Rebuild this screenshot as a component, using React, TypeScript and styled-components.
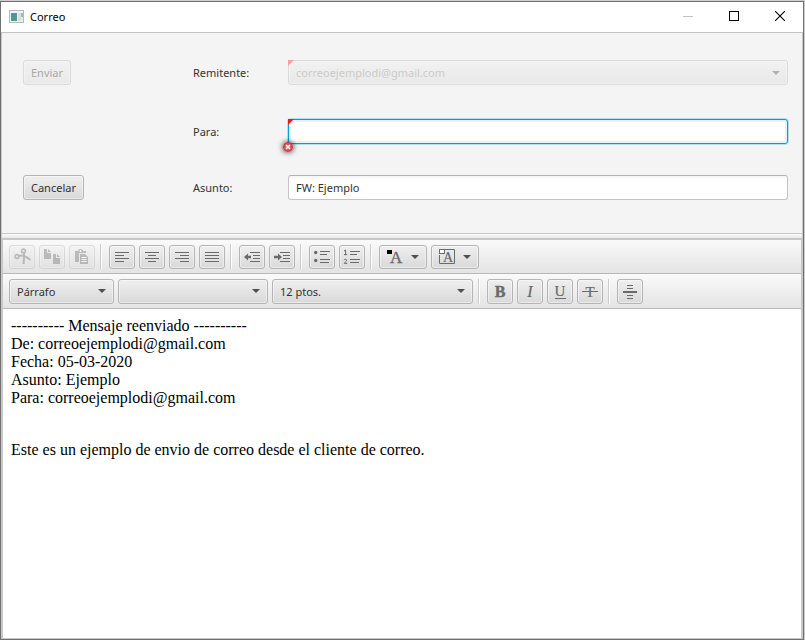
import React from "react";
import styled, { createGlobalStyle, css } from "styled-components";

const GlobalStyle = createGlobalStyle`
  *, *::before, *::after { box-sizing: border-box; }
  body { margin: 0; background: #c8c8c8; }
  body, button, input, select {
    font-family: "Noto Sans", "Open Sans", sans-serif;
    font-size: 11px;
    color: #333333;
  }
`;

const Desktop = styled.div`
  display: flex;
  min-height: 100vh;
  padding: 1px 1px 0 0;
  background: #cdcdcd;
`;

const Window = styled.main`
  flex: 1;
  min-width: 0;
  display: flex;
  flex-direction: column;
  border: 1px solid #707070;
  background: #f4f4f4;
`;

const TitleBar = styled.header`
  display: flex;
  align-items: center;
  gap: 5px;
  height: 31px;
  padding-left: 8px;
  background: #ffffff;
  border-bottom: 1px solid #c3c3c3;
`;

const Title = styled.h1`
  flex: 1;
  margin: 0;
  font-size: 11px;
  font-weight: 400;
  line-height: 28px;
  color: #000000;
`;

const WindowControls = styled.div`
  display: flex;
  height: 100%;
`;

const WindowButton = styled.button<{ $muted?: boolean }>`
  display: grid;
  place-items: center;
  width: 46px;
  padding: 0 0 2px;
  border: 0;
  background: transparent;
  color: ${(p) => (p.$muted ? "#c2c2c2" : "#000000")};
`;

const Content = styled.div`
  flex: 1;
  display: flex;
  flex-direction: column;
  border: 1px solid #c8c8c8;
  border-top: 0;
`;

const Form = styled.form`
  display: grid;
  grid-template-columns: 154px 79px minmax(0, 1fr);
  grid-template-rows: 25px 28px 25px;
  gap: 31px 16px;
  align-items: end;
  justify-items: start;
  padding: 27px 14px 33px 21px;
`;

const FieldLabel = styled.label`
  grid-column: 2;
  line-height: 25px;
`;

const chrome = css`
  border: 1px solid #b5b5b5;
  border-radius: 3px;
  background: linear-gradient(#efefef, #d9d9d9);
  box-shadow: inset 0 0 0 1px rgba(255, 255, 255, 0.45);
`;

const TextButton = styled.button`
  ${chrome}
  height: 25px;
  padding: 0 7px;
  &:disabled {
    opacity: 0.4;
    color: #333333;
  }
`;

const FieldSlot = styled.div`
  grid-column: 3;
  position: relative;
  width: 100%;
`;

const TextInput = styled.input`
  display: block;
  width: 100%;
  height: 25px;
  padding: 0 7px;
  border: 1px solid #c4c4c4;
  border-top-color: #b3b3b3;
  border-radius: 3px;
  background: linear-gradient(#f4f4f4, #ffffff 4px);
  outline: none;
  &[aria-invalid="true"] {
    border-color: #039ed3;
    background: #ffffff;
    box-shadow: 0 0 0 1px #b5dfee, inset 0 0 0 2px #e3f3f9;
  }
`;

const RequiredMark = styled.span<{ $faded?: boolean }>`
  position: absolute;
  top: 0;
  left: 0;
  width: 6px;
  height: 6px;
  background: ${(p) => (p.$faded ? "#fb9da1" : "#ff1018")};
  clip-path: polygon(0 0, 100% 0, 0 100%);
`;

const ErrorBadge = styled.span`
  position: absolute;
  bottom: -8px;
  left: -5px;
  display: block;
  width: 10px;
  height: 10px;
  border-radius: 50%;
  box-shadow: 0 0 5px 1px rgba(0, 0, 0, 0.6);
  svg { display: block; }
`;

const ComboFrame = styled.div<{ $width?: number; $faded?: boolean }>`
  display: grid;
  grid-template-columns: minmax(0, 1fr);
  align-items: center;
  width: ${(p) => (p.$width ? `${p.$width}px` : "100%")};
  opacity: ${(p) => (p.$faded ? 0.4 : 1)};
  > * { grid-area: 1 / 1; }
  > svg {
    justify-self: end;
    margin-right: 8px;
    pointer-events: none;
  }
`;

const ComboSelect = styled.select<{ $pale?: boolean }>`
  ${chrome}
  appearance: none;
  width: 100%;
  height: 25px;
  padding: 0 24px 0 7px;
  color: ${(p) => (p.$pale ? "#8c8c8c" : "#333333")};
  opacity: 1;
`;

const SplitDivider = styled.div`
  height: 5px;
  border-top: 1px solid #c8c8c8;
  background: linear-gradient(#fbfbfb, #e9e9e9);
`;

const Editor = styled.section`
  flex: 1;
  display: flex;
  flex-direction: column;
  border: 1px solid #c8c8c8;
  border-top-width: 2px;
  border-bottom: 0;
  background: #ffffff;
`;

const ToolBar = styled.div<{ $tall?: boolean }>`
  display: flex;
  align-items: center;
  gap: 4px;
  height: ${(p) => (p.$tall ? 35 : 34)}px;
  padding: 0 6px;
  border-bottom: 1px solid #b8b8b8;
  background: linear-gradient(#fafafa, #e4e4e4);
`;

const Separator = styled.span`
  width: 6px;
  height: 25px;
  padding-left: 1px;
  display: flex;
  &::before {
    content: "";
    width: 2px;
    background: linear-gradient(to right, #cbcbcb 50%, #ffffff 50%);
  }
`;

const ToolButton = styled.button<{ $wide?: boolean; $tall?: boolean }>`
  ${chrome}
  display: block;
  flex: none;
  width: ${(p) => (p.$wide ? 48 : 26)}px;
  height: ${(p) => (p.$tall ? 25 : 24)}px;
  padding: 0;
  color: #6a6a6a;
  &:disabled { opacity: 0.4; }
  svg { display: block; }
`;

const MessageBody = styled.div`
  flex: 1;
  padding: 8px;
  font-family: "Liberation Serif", serif;
  font-size: 16px;
  line-height: 18px;
  color: #000000;
  outline: none;
`;

const Paragraph = styled.p`
  margin: 34px 0 16px;
`;

const serif = "Liberation Serif, serif";

function Arrow() {
  return (
    <svg width="8" height="4" viewBox="0 0 8 4" aria-hidden="true">
      <path d="M0 0H8L4 4Z" fill="#4f4f4f" />
    </svg>
  );
}

function Glyph({ wide, tall, children }: { wide?: boolean; tall?: boolean; children: React.ReactNode }) {
  const w = wide ? 46 : 24;
  const h = tall ? 23 : 22;
  return (
    <svg width={w} height={h} viewBox={`0 0 ${w} ${h}`} fill="none" aria-hidden="true">
      {children}
    </svg>
  );
}

type ToolProps = { label: string; disabled?: boolean; wide?: boolean; tall?: boolean; children: React.ReactNode };

function Tool({ label, disabled, wide, tall, children }: ToolProps) {
  return (
    <ToolButton type="button" aria-label={label} disabled={disabled} $wide={wide} $tall={tall}>
      <Glyph wide={wide} tall={tall}>{children}</Glyph>
    </ToolButton>
  );
}

function Combo({ id, label, value, width, disabled }: { id?: string; label?: string; value: string; width?: number; disabled?: boolean }) {
  return (
    <ComboFrame $width={width} $faded={disabled}>
      <ComboSelect id={id} aria-label={label} defaultValue={value} disabled={disabled} $pale={disabled}>
        <option value={value}>{value}</option>
      </ComboSelect>
      <Arrow />
    </ComboFrame>
  );
}

const stroke = { stroke: "currentColor", strokeWidth: 1 };

export default function App() {
  return (
    <Desktop>
      <GlobalStyle />
      <Window>
        <TitleBar>
          <svg width="16" height="14" viewBox="0 0 16 14" aria-hidden="true">
            <defs>
              <linearGradient id="pane" x1="0" y1="0" x2="0.6" y2="1">
                <stop offset="0" stopColor="#5f86bd" />
                <stop offset="1" stopColor="#4aa075" />
              </linearGradient>
            </defs>
            <rect x="0.5" y="0.5" width="14" height="12" fill="#f3f3f5" stroke="#b4b7bf" />
            <rect x="2" y="3" width="6" height="8" fill="url(#pane)" />
            <rect x="9" y="3" width="3" height="8" fill="#dcdde1" />
            <rect x="12" y="3" width="2" height="4" fill="#8fc3b4" />
            <rect x="12" y="7" width="2" height="4" fill="#e6ebe9" />
          </svg>
          <Title>Correo</Title>
          <WindowControls>
            <WindowButton type="button" aria-label="Minimizar" $muted>
              <svg width="10" height="10" viewBox="0 0 10 10"><path d="M0 5.5H10" {...stroke} /></svg>
            </WindowButton>
            <WindowButton type="button" aria-label="Maximizar">
              <svg width="10" height="10" viewBox="0 0 10 10" fill="none"><rect x="0.5" y="0.5" width="9" height="9" {...stroke} /></svg>
            </WindowButton>
            <WindowButton type="button" aria-label="Cerrar">
              <svg width="10" height="10" viewBox="0 0 10 10"><path d="M0 0L10 10M10 0L0 10" stroke="currentColor" strokeWidth="1.1" /></svg>
            </WindowButton>
          </WindowControls>
        </TitleBar>
        <Content>
          <Form onSubmit={(e) => e.preventDefault()}>
            <TextButton type="submit" disabled>Enviar</TextButton>
            <FieldLabel htmlFor="remitente">Remitente:</FieldLabel>
            <FieldSlot>
              <Combo id="remitente" value="correoejemplodi@gmail.com" disabled />
              <RequiredMark $faded />
            </FieldSlot>
            <FieldLabel htmlFor="para">Para:</FieldLabel>
            <FieldSlot>
              <TextInput id="para" type="text" defaultValue="" aria-invalid="true" />
              <RequiredMark />
              <ErrorBadge>
                <svg width="10" height="10" viewBox="0 0 10 10" aria-hidden="true">
                  <circle cx="5" cy="5" r="5" fill="#cf3038" />
                  <circle cx="5" cy="5" r="3.8" fill="#e0585c" />
                  <path d="M3 3L7 7M7 3L3 7" stroke="#ffffff" strokeWidth="1.4" />
                </svg>
              </ErrorBadge>
            </FieldSlot>
            <TextButton type="button">Cancelar</TextButton>
            <FieldLabel htmlFor="asunto">Asunto:</FieldLabel>
            <FieldSlot>
              <TextInput id="asunto" type="text" defaultValue="FW: Ejemplo" />
            </FieldSlot>
          </Form>
          <SplitDivider />
          <Editor>
            <ToolBar role="toolbar" aria-label="Edición">
              <Tool label="Cortar" disabled>
                <g stroke="currentColor">
                  <circle cx="7" cy="10.5" r="1.9" strokeWidth="1.6" />
                  <circle cx="13.5" cy="5" r="1.9" strokeWidth="1.6" />
                  <path d="M8.8 10C12 8.8 15.5 10 20.3 14M14 7C14.6 10 13.6 13 13.6 18" strokeWidth="2" />
                </g>
              </Tool>
              <Tool label="Copiar" disabled>
                <g fill="currentColor">
                  <path d="M4 3H7V7H11V13H4ZM8 3L11 6H8Z" />
                  <path d="M13 8H16V12H20V18H13ZM17 8L20 11H17Z" />
                </g>
              </Tool>
              <Tool label="Pegar" disabled>
                <path d="M5 5H8C8 3.8 9 3 10.5 3S13 3.8 13 5H16V7H9V16H5Z" fill="currentColor" />
                <circle cx="10.5" cy="5" r="1" fill="#ffffff" />
                <path d="M10 8H15L18 11V18H10Z" fill="currentColor" />
                <path d="M11.5 11.5H16.5M11.5 13.5H16.5M11.5 15.5H16.5" stroke="#ffffff" />
              </Tool>
              <Separator />
              <Tool label="Alinear a la izquierda"><path d="M5 6.5H19M5 9.5H14M5 12.5H19M5 15.5H14" {...stroke} /></Tool>
              <Tool label="Centrar"><path d="M5 6.5H19M8 9.5H16M5 12.5H19M8 15.5H16" {...stroke} /></Tool>
              <Tool label="Alinear a la derecha"><path d="M5 6.5H19M10 9.5H19M5 12.5H19M10 15.5H19" {...stroke} /></Tool>
              <Tool label="Justificar"><path d="M5 6.5H19M5 9.5H19M5 12.5H19M5 15.5H19" {...stroke} /></Tool>
              <Separator />
              <Tool label="Reducir sangría">
                <path d="M10 6.5H20M13 9.5H20M13 12.5H20M10 15.5H20" {...stroke} />
                <path d="M4 11L8 7.5V9.7H11V12.3H8V14.5Z" fill="currentColor" />
              </Tool>
              <Tool label="Aumentar sangría">
                <path d="M10 6.5H20M13 9.5H20M13 12.5H20M10 15.5H20" {...stroke} />
                <path d="M12 11L8 7.5V9.7H4V12.3H8V14.5Z" fill="currentColor" />
              </Tool>
              <Separator />
              <Tool label="Viñetas">
                <path d="M10 5.5H20M10 8.5H17M10 13.5H20M10 16.5H19" {...stroke} />
                <circle cx="5.7" cy="6.5" r="1.7" fill="currentColor" />
                <circle cx="5.7" cy="14.5" r="1.7" fill="currentColor" />
              </Tool>
              <Tool label="Numeración">
                <path d="M10 5.5H20M10 8.5H17M10 13.5H20M10 16.5H19" {...stroke} />
                <path d="M4 5L5.6 4V8.5M4 8.6H7.2M4 14.2C4.4 12.8 6.8 13 6.6 14.4C6.4 15.6 4.6 16.2 4.3 17.4H7.2" {...stroke} />
              </Tool>
              <Separator />
              <Tool label="Color del texto" wide>
                <text x="10" y="17" fontFamily={serif} fontSize="17" fill="currentColor" stroke="currentColor" strokeWidth="0.3">A</text>
                <rect x="7" y="4" width="5" height="4" fill="#000000" />
                <path d="M31 9H39L35 13Z" fill="#4f4f4f" />
              </Tool>
              <Tool label="Color de fondo" wide>
                <path d="M13 3.5H22.5V17.5H7.5V9" {...stroke} />
                <text x="11" y="16" fontFamily={serif} fontSize="14" fill="currentColor" stroke="currentColor" strokeWidth="0.2">A</text>
                <rect x="7.5" y="3.5" width="5" height="4" fill="#ffffff" {...stroke} />
                <path d="M31 9H39L35 13Z" fill="#4f4f4f" />
              </Tool>
            </ToolBar>
            <ToolBar role="toolbar" aria-label="Formato" $tall>
              <Combo label="Estilo de párrafo" value="Párrafo" width={105} />
              <Combo label="Fuente" value="" width={150} />
              <Combo label="Tamaño" value="12 ptos." width={201} />
              <Separator />
              <Tool label="Negrita" tall>
                <text x="12" y="17" textAnchor="middle" fontFamily={serif} fontSize="16" fontWeight="700" fill="currentColor" stroke="currentColor" strokeWidth="0.4">B</text>
              </Tool>
              <Tool label="Cursiva" tall>
                <text x="12" y="17" textAnchor="middle" fontFamily={serif} fontSize="16" fontStyle="italic" fill="currentColor" stroke="currentColor" strokeWidth="0.2">I</text>
              </Tool>
              <Tool label="Subrayado" tall>
                <text x="12" y="16" textAnchor="middle" fontFamily={serif} fontSize="15" fill="currentColor" stroke="currentColor" strokeWidth="0.2">U</text>
                <path d="M7 18.5H18" {...stroke} />
              </Tool>
              <Tool label="Tachado" tall>
                <text x="12" y="17" textAnchor="middle" fontFamily={serif} fontSize="15" fill="currentColor" stroke="currentColor" strokeWidth="0.2">T</text>
                <path d="M4 11.5H20" {...stroke} />
              </Tool>
              <Separator />
              <Tool label="Línea horizontal" tall>
                <path d="M9 5.5H15M9 8.5H15M9 15.5H15M9 18.5H15" {...stroke} />
                <path d="M5 12H19" stroke="currentColor" strokeWidth="2" />
              </Tool>
            </ToolBar>
            <MessageBody role="textbox" aria-multiline="true" aria-label="Mensaje" contentEditable suppressContentEditableWarning>
              ---------- Mensaje reenviado ----------<br />
              De: correoejemplodi@gmail.com<br />
              Fecha: 05-03-2020<br />
              Asunto: Ejemplo<br />
              Para: correoejemplodi@gmail.com<br />
              <Paragraph>Este es un ejemplo de envio de correo desde el cliente de correo.</Paragraph>
            </MessageBody>
          </Editor>
        </Content>
      </Window>
    </Desktop>
  );
}
